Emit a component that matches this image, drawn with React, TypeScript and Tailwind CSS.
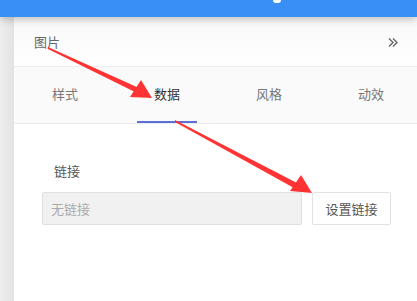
export default function App() {
  const tabs = ["样式", "数据", "风格", "动效"];
  return (
    <div
      className="relative w-[417px] h-[301px] overflow-hidden bg-white"
      style={{ fontFamily: '"Noto Sans CJK SC", "Noto Sans", sans-serif' }}
    >
      <div className="relative h-[17px] bg-[#3a8ff7] shadow-[0_2px_8px_rgba(0,0,0,0.25)] z-10">
        <div className="absolute left-[273px] top-0 w-[8px] h-[3px] rounded-b bg-white" />
      </div>
      <div className="flex h-[284px]">
        <div className="w-[14px] shrink-0 bg-gradient-to-r from-[#eeeeee] to-[#e3e3e3]" />
        <div className="flex-1 min-w-0 flex flex-col bg-white">
          <div className="h-[50px] flex items-center justify-between pl-[20px] pr-[19px] pt-[1px] border-b border-[#ececec] bg-gradient-to-b from-[#f8f8f8] to-white">
            <span className="text-[13px] text-[#666]">图片</span>
            <svg width="10" height="11" viewBox="0 0 10 11" fill="none" stroke="#666" strokeWidth="1.4">
              <path d="M1 1.5 L5 5.5 L1 9.5" />
              <path d="M5 1.5 L9 5.5 L5 9.5" />
            </svg>
          </div>
          <div className="h-[57px] flex overflow-hidden bg-[#fafafa] border-b border-[#ebebeb]">
            {tabs.map((t, i) => (
              <div key={t} className="w-[102px] shrink-0 flex justify-center">
                <div
                  className={
                    "h-full w-[60px] flex items-center justify-center text-[13px] border-b-2 " +
                    (i === 1 ? "text-[#333] border-[#5b6fd6]" : "text-[#777] border-transparent")
                  }
                >
                  {t}
                </div>
              </div>
            ))}
          </div>
          <div className="pl-[28px] pr-[12px] pt-[38px]">
            <div className="pl-[12px] text-[13px] text-[#555] leading-[18px]">链接</div>
            <div className="flex gap-[10px] mt-[12px]">
              <div className="w-[260px] h-[33px] flex items-center px-[8px] bg-[#f1f1f1] border border-[#e0e0e0] rounded-[2px] text-[13px] text-[#aaa]">
                无链接
              </div>
              <button className="w-[79px] h-[33px] flex items-center justify-center bg-white border border-[#e2e2e2] rounded-[2px] text-[13px] text-[#555]">
                设置链接
              </button>
            </div>
          </div>
        </div>
      </div>
      <svg className="absolute inset-0 z-20 pointer-events-none" width="417" height="301">
        <polygon points="48,47 48,49 137,93 139,88" fill="#f33" />
        <polygon points="152,98 130,97 141,80" fill="#f33" />
        <polygon points="175,120 175,122 294,188 297,183" fill="#f33" />
        <polygon points="312,193 290,191 301,175" fill="#f33" />
      </svg>
    </div>
  );
}
